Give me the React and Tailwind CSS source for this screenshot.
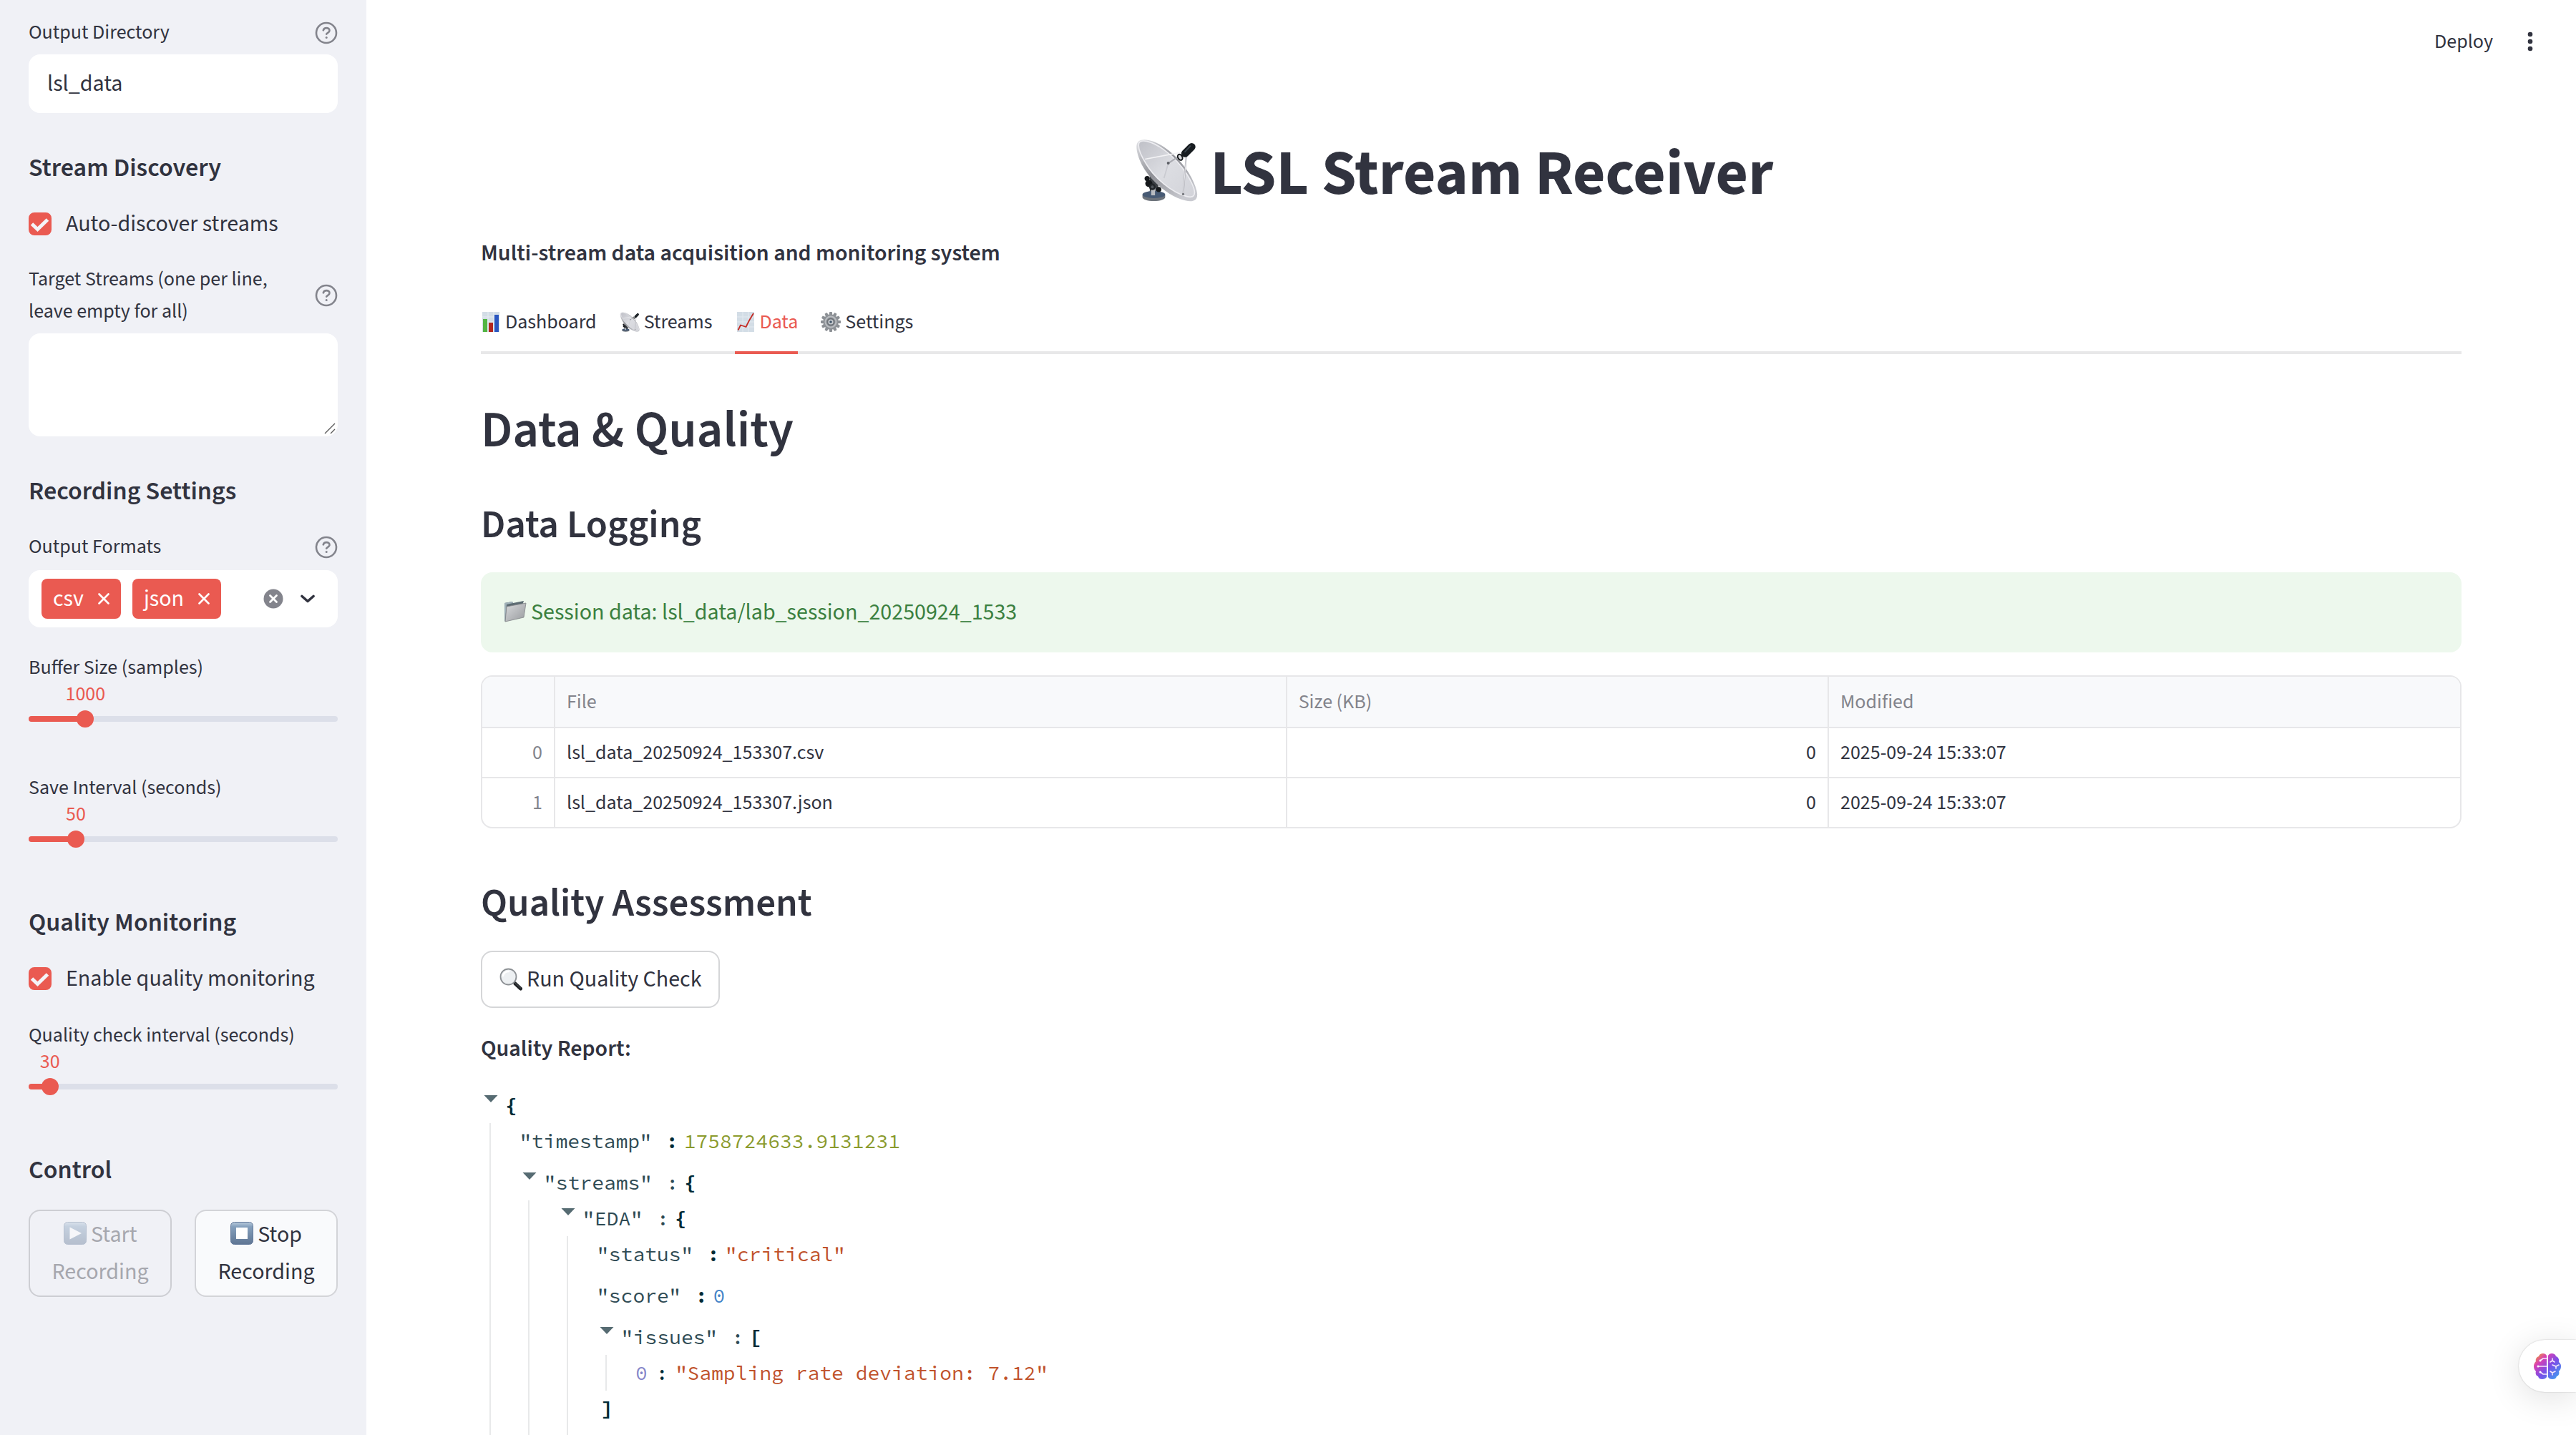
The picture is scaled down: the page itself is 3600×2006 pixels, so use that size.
import { useId, useState } from "react";

/* ---------- icons ---------- */

function DishIcon({ className }) {
  const id = useId();
  return (
    <svg viewBox="45 43 266 266" className={className} aria-hidden="true">
      <defs>
        <linearGradient id={id + "a"} x1="0" y1="0" x2="1" y2="1">
          <stop offset="0" stopColor="#bfc0c7" />
          <stop offset="0.5" stopColor="#dcdde2" />
          <stop offset="1" stopColor="#d2d3d9" />
        </linearGradient>
        <linearGradient id={id + "b"} x1="0" y1="0" x2="0.7" y2="1">
          <stop offset="0" stopColor="#e3e4e8" />
          <stop offset="0.5" stopColor="#8f9096" />
          <stop offset="1" stopColor="#c9cad0" />
        </linearGradient>
      </defs>
      <path d="M108 190v90h36v-60z" fill="#3b3f44" />
      <rect x="113" y="245" width="19" height="46" fill="#a9adb3" />
      <path d="M77 280v10c0 9 21 16 48 16s48-7 48-16v-10z" fill="#6d737b" />
      <ellipse cx="125" cy="279" rx="48" ry="15" fill="#475a74" />
      <rect x="114" y="240" width="16" height="42" fill="#b9bcc1" />
      <circle cx="97" cy="211" r="11" fill="#15181b" />
      <circle cx="104" cy="232" r="15" fill="#15181b" />
      <circle cx="119" cy="246" r="14" fill="#22262a" />
      <circle cx="119" cy="246" r="6" fill="#50555b" />
      <circle cx="146" cy="257" r="11" fill="#15181b" />
      <path d="M52 75C52 38 104 36 168 78c62 42 118 112 138 184 10 40-12 50-48 42-72-18-148-84-183-150C60 124 52 98 52 75z" fill={"url(#" + id + "b)"} />
      <path d="M62 62c8-18 50-12 104 26 58 42 108 106 128 164 10 34-4 42-32 34C198 268 126 206 92 148 72 116 56 82 62 62z" fill={"url(#" + id + "a)"} />
      <path d="M62 62c8-18 50-12 104 26 58 42 108 106 128 164 10 34-4 42-32 34C198 268 126 206 92 148 72 116 56 82 62 62z" fill="none" stroke="#ededf1" strokeWidth="5" />
      <path d="M186 147l-18 62" stroke="#c2c3ca" strokeWidth="5" opacity="0.7" />
      <path d="M88 129l150-28" stroke="#f3f3f5" strokeWidth="5" />
      <path d="M186 147l44-30M262 118l-13 160" stroke="#a8a9b0" strokeWidth="6" />
      <path d="M262 118l-13 160" stroke="#e8e8ec" strokeWidth="3" />
      <circle cx="186" cy="146" r="6" fill="#5d6066" />
      <circle cx="249" cy="277" r="5" fill="#74767c" />
      <path d="M257 105l28-28" stroke="#171c20" strokeWidth="32" strokeLinecap="round" />
      <path d="M257 98l22-24" stroke="#3a444c" strokeWidth="6" strokeLinecap="round" />
      <ellipse cx="236" cy="121" rx="9" ry="13" transform="rotate(-30 236 121)" fill="#d9dade" stroke="#15181b" strokeWidth="6" />
    </svg>
  );
}

function BarsIcon({ className }) {
  return (
    <svg viewBox="0 0 28 28" className={className} aria-hidden="true">
      <rect x="2" y="0" width="24" height="28" fill="#d3dde6" />
      <path d="M2 7h24M2 14h24M2 21h24M10 0v28M18 0v28" stroke="#e6edf3" strokeWidth="1" />
      <rect x="3" y="10" width="6" height="18" fill="#52b543" />
      <rect x="11" y="15" width="6" height="13" fill="#b3261f" />
      <rect x="19" y="4" width="6" height="24" fill="#2a56c0" />
    </svg>
  );
}

function TrendIcon({ className }) {
  return (
    <svg viewBox="0 0 28 28" className={className} aria-hidden="true">
      <rect x="3" y="0" width="24" height="28" fill="#d3dde6" />
      <path d="M3 7h24M3 14h24M3 21h24M11 0v28M19 0v28" stroke="#e3eaf1" strokeWidth="1" />
      <path d="M4.500 25.500L8 18.500l7.500 2.500L20 12l6-10" fill="none" stroke="#c42b24" strokeWidth="1.800" strokeLinejoin="round" />
    </svg>
  );
}

function GearIcon({ className }) {
  const teeth = [0, 30, 60, 90, 120, 150, 180, 210, 240, 270, 300, 330];
  return (
    <svg viewBox="0 0 28 28" className={className} aria-hidden="true">
      {teeth.map((a) => (
        <path key={a} d="M12.300 0h3.400l.8 5h-5z" fill="#8b8f94" transform={"rotate(" + a + " 14 14)"} />
      ))}
      <circle cx="14" cy="14" r="10.500" fill="#8f9398" />
      <circle cx="14" cy="14" r="7.500" fill="none" stroke="#b9bcc0" strokeWidth="2" />
      <circle cx="14" cy="14" r="5.500" fill="#6f747a" />
      <circle cx="14" cy="14" r="3.600" fill="#c9ccd0" />
      <circle cx="14" cy="14" r="1.800" fill="#3f5468" />
    </svg>
  );
}

function FolderIcon({ className }) {
  const id = useId();
  return (
    <svg viewBox="0 0 32 32" className={className} aria-hidden="true">
      <defs>
        <linearGradient id={id} x1="0" y1="0" x2="1" y2="1">
          <stop offset="0" stopColor="#d9dbdd" />
          <stop offset="1" stopColor="#97999d" />
        </linearGradient>
      </defs>
      <path d="M1 3l11-2 1 2 15-3-2 6L3 29l-2-1z" fill="#5c6b72" />
      <path d="M1 3l11-2 1 2-9 2-2 23-1 0z" fill="#9fb0b8" />
      <path d="M4 8l27-5-3 20L2 29z" fill={"url(#" + id + ")"} stroke="#808387" strokeWidth="0.800" />
    </svg>
  );
}

function MagnifierIcon({ className }) {
  return (
    <svg viewBox="0 0 32 32" className={className} aria-hidden="true">
      <path d="M19 19l4 4" stroke="#7d8084" strokeWidth="3" />
      <path d="M22 22l7.500 7" stroke="#202326" strokeWidth="5" strokeLinecap="round" />
      <path d="M22.500 21.500l7 6.500" stroke="#5c6064" strokeWidth="1" strokeLinecap="round" />
      <circle cx="12.500" cy="12.500" r="11" fill="#edf0f2" stroke="#8d9195" strokeWidth="1.800" />
      <path d="M5 11c1-4 4-6 8-6" fill="none" stroke="#ffffff" strokeWidth="2.500" strokeLinecap="round" />
    </svg>
  );
}

function KeycapIcon({ className, shape }) {
  const id = useId();
  return (
    <svg viewBox="0 0 32 32" className={className} aria-hidden="true">
      <defs>
        <linearGradient id={id} x1="0" y1="0" x2="0" y2="1">
          <stop offset="0" stopColor="#b9cbdc" />
          <stop offset="0.200" stopColor="#85a0bd" />
          <stop offset="1" stopColor="#5f7593" />
        </linearGradient>
      </defs>
      <rect x="0.500" y="0.500" width="31" height="31" rx="5" fill={"url(#" + id + ")"} stroke="#62789a" />
      {shape === "play" ? <path d="M8.500 7.500v17L25 16z" fill="#fff" /> : <rect x="8" y="8" width="16" height="16" fill="#fff" />}
    </svg>
  );
}

function HelpIcon() {
  return (
    <svg viewBox="0 0 32 32" className="h-8 w-8 shrink-0" fill="none" stroke="#83848c" strokeLinecap="round" strokeLinejoin="round" aria-label="Help">
      <circle cx="16" cy="16" r="14" strokeWidth="2.600" />
      <path d="M11.800 12.300c.6-2.100 2.300-3.200 4.400-3.200 2.500 0 4.300 1.500 4.300 3.600 0 2.700-3.300 3-4.300 4.900" strokeWidth="2.600" />
      <path d="M16.200 22.500v.1" strokeWidth="3" />
    </svg>
  );
}

function CrossIcon() {
  return (
    <svg viewBox="0 0 16 16" className="h-4 w-4" fill="none" stroke="#fff" strokeWidth="2.600" strokeLinecap="round" aria-hidden="true">
      <path d="M1.500 1.500l13 13M14.500 1.500l-13 13" />
    </svg>
  );
}

function BrainIcon() {
  const id = useId();
  return (
    <svg viewBox="0 0 38 36" className="h-9 w-[38px]" aria-hidden="true">
      <defs>
        <linearGradient id={id} x1="0" y1="0" x2="1" y2="1">
          <stop offset="0.050" stopColor="#f0a02c" />
          <stop offset="0.270" stopColor="#d83fb4" />
          <stop offset="0.550" stopColor="#7a4fe8" />
          <stop offset="0.950" stopColor="#3aa0f0" />
        </linearGradient>
      </defs>
      <g fill={"url(#" + id + ")"}>
        <path d="M18 3v30c-1 2-4 3-6 3-3 0-5-1-6-4-3-1-4-4-3-7-2-2-3-4-3-7s1-5 3-7c-1-3 1-6 4-7 1-3 3-4 6-4 2 0 4 1 5 3zM20 3v30c1 2 3 3 6 3 3 0 5-1 6-4 3-1 4-4 3-7 2-2 3-4 3-7s-1-4-3-6c1-4-1-7-4-8-1-3-3-4-6-4-2 0-4 1-5 3z" />
      </g>
      <g fill="none" stroke="#f6e8fb" strokeWidth="1.600" strokeLinecap="round">
        <path d="M18 7h-5l-4 3M18 18H6M18 29h-5l-4-3M26 7v3l-3 2M26 10l3 2M26 16l5 2 4-2M31 18v3M23 25l3 2 4-2M26 27v3" />
      </g>
      <g fill="#fff">
        <circle cx="9" cy="10" r="1.500" />
        <circle cx="6" cy="18" r="1.500" />
        <circle cx="9" cy="26" r="1.500" />
      </g>
    </svg>
  );
}

/* ---------- sidebar ---------- */

function SideHeading({ children }) {
  return <h3 className="pt-[22px] text-[36px] leading-[46px] font-semibold">{children}</h3>;
}

function FieldLabel({ htmlFor, children, help }) {
  return (
    <div className="flex items-center justify-between gap-4">
      <label htmlFor={htmlFor} className="text-[28px] leading-[45px]">
        {children}
      </label>
      {help && <HelpIcon />}
    </div>
  );
}

function Check({ id, children }) {
  return (
    <label htmlFor={id} className="flex h-[46px] items-center gap-5 text-[32px] leading-[46px]">
      <span className="relative h-8 w-8 shrink-0">
        <input id={id} type="checkbox" defaultChecked className="peer block h-8 w-8 appearance-none rounded-lg border-2 border-gray-300 bg-white checked:border-[#ea5a51] checked:bg-[#ea5a51]" />
        <svg viewBox="0 0 32 32" className="pointer-events-none absolute inset-0 hidden h-8 w-8 peer-checked:block" fill="none" stroke="#f4f4f8" strokeWidth="5" aria-hidden="true">
          <path d="M4.500 16l8 7.500L26.500 10" />
        </svg>
      </span>
      {children}
    </label>
  );
}

function Slider({ id, label, min, max, initial }) {
  const [value, setValue] = useState(initial);
  const pct = ((value - min) / (max - min)) * 100;
  return (
    <div className="h-[136px]">
      <label htmlFor={id} className="block text-[28px] leading-[49px]">
        {label}
      </label>
      <div className="flex h-6">
        <div style={{ width: pct + "%" }} />
        <output htmlFor={id} className="flex w-0 justify-center text-[28px] leading-6 text-[#ea5a51]">
          {value}
        </output>
      </div>
      <div className="relative mt-[11px] flex h-6 items-center">
        <div className="h-2 w-full overflow-hidden rounded-full bg-[#dcdfe9]">
          <div className="h-full bg-[#ea5a51]" style={{ width: pct + "%" }} />
        </div>
        <input
          id={id}
          type="range"
          min={min}
          max={max}
          value={value}
          onChange={(e) => setValue(Number(e.target.value))}
          className="absolute -inset-x-3 h-6 appearance-none bg-transparent [&::-webkit-slider-thumb]:h-6 [&::-webkit-slider-thumb]:w-6 [&::-webkit-slider-thumb]:appearance-none [&::-webkit-slider-thumb]:rounded-full [&::-webkit-slider-thumb]:bg-[#ea5a51]"
        />
      </div>
    </div>
  );
}

function Tag({ children }) {
  return (
    <span className="flex h-14 items-center rounded-lg bg-[#ea5a51] px-4 text-[32px] text-white">
      {children}
      <button type="button" aria-label={"Remove " + children} className="ml-5">
        <CrossIcon />
      </button>
    </span>
  );
}

function Sidebar() {
  return (
    <aside className="flex w-[512px] shrink-0 flex-col gap-8 bg-[#f0f1f6] px-10 pt-[23px]">
      <div className="flex flex-col gap-2">
        <FieldLabel htmlFor="out-dir" help>
          Output Directory
        </FieldLabel>
        <input id="out-dir" type="text" defaultValue="lsl_data" className="h-[82px] w-full rounded-2xl bg-white px-[26px] text-[32px]" />
      </div>

      <SideHeading>Stream Discovery</SideHeading>
      <Check id="auto-discover">Auto-discover streams</Check>
      <div className="flex flex-col gap-2">
        <FieldLabel htmlFor="targets" help>
          Target Streams (one per line, leave empty for all)
        </FieldLabel>
        <div className="relative">
          <textarea id="targets" className="block h-36 w-full resize-none rounded-2xl bg-white px-6 py-4 text-[32px]" />
          <svg viewBox="0 0 16 16" className="pointer-events-none absolute right-[3px] bottom-[3px] h-4 w-4" stroke="#5b5b5b" strokeWidth="1.400" aria-hidden="true">
            <path d="M1 15L15 1M9 15l6-6" />
          </svg>
        </div>
      </div>

      <SideHeading>Recording Settings</SideHeading>
      <div className="flex flex-col gap-2">
        <div className="pb-0.5">
          <FieldLabel htmlFor="formats" help>
            Output Formats
          </FieldLabel>
        </div>
        <div className="flex h-20 items-center gap-4 rounded-2xl bg-white pr-8 pl-[18px]">
          <Tag>csv</Tag>
          <Tag>json</Tag>
          <input id="formats" type="text" className="min-w-0 flex-1 text-[32px]" />
          <button type="button" aria-label="Clear all" className="mr-2">
            <svg viewBox="0 0 28 28" className="h-7 w-7" aria-hidden="true">
              <circle cx="14" cy="14" r="13.500" fill="#83848c" />
              <path d="M9.500 9.500l9 9M18.500 9.500l-9 9" stroke="#fff" strokeWidth="2.800" strokeLinecap="round" />
            </svg>
          </button>
          <button type="button" aria-label="Open list">
            <svg viewBox="0 0 20 12" className="h-3 w-5" fill="none" stroke="#31333f" strokeWidth="3.600" strokeLinecap="round" strokeLinejoin="round" aria-hidden="true">
              <path d="M2 2.500l8 7 8-7" />
            </svg>
          </button>
        </div>
      </div>
      <Slider id="buffer" label="Buffer Size (samples)" min={100} max={5000} initial={1000} />
      <Slider id="save" label="Save Interval (seconds)" min={5} max={300} initial={50} />

      <SideHeading>Quality Monitoring</SideHeading>
      <Check id="enable-quality">Enable quality monitoring</Check>
      <Slider id="quality" label="Quality check interval (seconds)" min={10} max={300} initial={30} />

      <SideHeading>Control</SideHeading>
      <div className="grid grid-cols-2 gap-8">
        <button type="button" disabled className="rounded-2xl border-2 border-[#cdced3] px-6 py-[7px] text-[32px] leading-[52px] text-[#a6a7ae]">
          <KeycapIcon shape="play" className="inline h-8 w-8 align-[-4px] opacity-40" /> Start Recording
        </button>
        <button type="button" className="rounded-2xl border-2 border-[#d3d4d8] bg-[#f9fafc] px-6 py-[7px] text-[32px] leading-[52px]">
          <KeycapIcon shape="stop" className="inline h-8 w-8 align-[-4px]" /> Stop Recording
        </button>
      </div>
    </aside>
  );
}

/* ---------- main ---------- */

const TABS = [
  { name: "Dashboard", Icon: BarsIcon },
  { name: "Streams", Icon: DishIcon },
  { name: "Data", Icon: TrendIcon },
  { name: "Settings", Icon: GearIcon },
];

function Tabs() {
  const [active, setActive] = useState("Data");
  return (
    <div role="tablist" className="mt-7 flex gap-8 shadow-[inset_0_-4px_0_#e8e8e9]">
      {TABS.map(({ name, Icon }) => (
        <button
          key={name}
          type="button"
          role="tab"
          aria-selected={active === name}
          onClick={() => setActive(name)}
          className={"flex h-[87px] items-center gap-1.5 border-b-4 text-[28px] " + (active === name ? "border-[#ea5a51] text-[#ea5a51]" : "border-transparent")}
        >
          <Icon className="h-7 w-7" />
          {name}
        </button>
      ))}
    </div>
  );
}

const FILES = [
  { file: "lsl_data_20250924_153307.csv", size: 0, modified: "2025-09-24 15:33:07" },
  { file: "lsl_data_20250924_153307.json", size: 0, modified: "2025-09-24 15:33:07" },
];

function FileTable() {
  return (
    <div className="mt-8 overflow-hidden rounded-2xl border-2 border-[#e7e7e9]">
      <table className="w-full table-fixed border-separate border-spacing-0 text-[28px]">
        <colgroup>
          <col className="w-[102px]" />
          <col className="w-[37%]" />
          <col className="w-[27.400%]" />
          <col />
        </colgroup>
        <thead className="bg-[#f8f9fb] text-left text-[#83848c]">
          <tr className="h-[72px]">
            <th className="border-r-2 border-b-2 border-[#e7e7e9]" />
            <th className="border-r-2 border-b-2 border-[#e7e7e9] px-4 font-normal">File</th>
            <th className="border-r-2 border-b-2 border-[#e7e7e9] px-4 font-normal">Size (KB)</th>
            <th className="border-b-2 border-[#e7e7e9] px-4 font-normal">Modified</th>
          </tr>
        </thead>
        <tbody className="[&>tr:last-child>td]:border-b-0">
          {FILES.map((f, i) => (
            <tr key={f.file} className="h-[70px] last:h-[68px]">
              <td className="border-r-2 border-b-2 border-[#e7e7e9] px-4 text-right text-[#83848c]">{i}</td>
              <td className="border-r-2 border-b-2 border-[#e7e7e9] px-4">{f.file}</td>
              <td className="border-r-2 border-b-2 border-[#e7e7e9] px-4 text-right">{f.size}</td>
              <td className="border-b-2 border-[#e7e7e9] px-4">{f.modified}</td>
            </tr>
          ))}
        </tbody>
      </table>
    </div>
  );
}

function Leaf({ name, index, value, tone }) {
  return (
    <div className="flex">
      {index === undefined ? (
        <>
          <span className="mr-5">"{name}"</span>
          <span className="mr-2 font-semibold text-[#002b36]">:</span>
        </>
      ) : (
        <>
          <span className="mr-3 text-[#8585c9]">{index}</span>
          <span className="mr-2.5 text-[#002b36]">:</span>
        </>
      )}
      <span className={tone}>{value}</span>
    </div>
  );
}

function Node({ name, open, close, children }) {
  return (
    <div>
      <div className="flex">
        <button type="button" aria-label="Collapse" className="flex h-[50px] w-[34px] items-start pt-[11px] pl-1">
          <svg viewBox="0 0 20 10" className="h-2.5 w-5" fill="#566b72" aria-hidden="true">
            <path d="M0.500 0h19L10 10z" />
          </svg>
        </button>
        {name && (
          <>
            <span className="mr-5">"{name}"</span>
            <span className="mr-2">:</span>
          </>
        )}
        <span className="font-bold text-[#002b36]">{open}</span>
      </div>
      <div className="ml-3 flex flex-col gap-2 border-l-2 border-[#e8e9ea] pl-10">{children}</div>
      {close && <div className="pl-1.5 font-bold text-[#002b36]">{close}</div>}
    </div>
  );
}

function QualityReport() {
  return (
    <div className="mt-7 font-['Source_Code_Pro','Liberation_Mono',monospace] text-[28px] leading-[50px] text-[#2f4b54]">
      <Node open="{">
        <Leaf name="timestamp" value="1758724633.9131231" tone="text-[#8a9a2c]" />
        <Node name="streams" open="{">
          <Node name="EDA" open="{">
            <Leaf name="status" value={'"critical"'} tone="text-[#c0522b]" />
            <Leaf name="score" value="0" tone="text-[#4484c8]" />
            <Node name="issues" open="[" close="]">
              <Leaf index={0} value={'"Sampling rate deviation: 7.12"'} tone="text-[#c0522b]" />
            </Node>
            <div className="h-10" />
          </Node>
        </Node>
      </Node>
    </div>
  );
}

export default function App() {
  return (
    <div className="flex h-screen overflow-hidden bg-white font-['Source_Sans_3','Noto_Sans_CJK_SC',sans-serif] text-[#31333f]">
      <Sidebar />
      <main className="min-w-0 flex-1 overflow-hidden">
        <header className="flex h-[116px] items-center justify-end gap-[42px] pr-[54px] text-[28px]">
          <button type="button">Deploy</button>
          <button type="button" aria-label="Menu" className="w-5">
            <svg viewBox="0 0 20 28" className="h-7 w-5" fill="#31333f" aria-hidden="true">
              <circle cx="10" cy="4" r="3.300" />
              <circle cx="10" cy="14" r="3.300" />
              <circle cx="10" cy="24" r="3.300" />
            </svg>
          </button>
        </header>
        <div className="px-[160px] pt-[75px]">
          <h1 className="pr-12 text-center text-[88px] leading-[106px] font-bold">
            <DishIcon className="inline h-[88px] w-[88px] align-[-11px]" /> LSL Stream Receiver
          </h1>
          <p className="mt-8 text-[32px] leading-[51px] font-semibold">Multi-stream data acquisition and monitoring system</p>
          <Tabs />
          <h2 className="mt-16 text-[71px] leading-[86px] font-semibold">Data &amp; Quality</h2>
          <h3 className="mt-14 text-[55px] leading-[67px] font-semibold">Data Logging</h3>
          <div role="status" className="mt-8 flex h-28 items-center gap-1.5 rounded-2xl bg-[#edf8ed] px-8 text-[32px] text-[#3b8040]">
            <FolderIcon className="h-8 w-8" />
            Session data: lsl_data/lab_session_20250924_1533
          </div>
          <FileTable />
          <h3 className="mt-[72px] text-[55px] leading-[67px] font-semibold">Quality Assessment</h3>
          <button type="button" className="mt-8 flex h-20 items-center gap-1.5 rounded-2xl border-2 border-[#d5d6d8] px-6 text-[32px]">
            <MagnifierIcon className="h-8 w-8" />
            Run Quality Check
          </button>
          <p className="mt-8 text-[32px] leading-[51px] font-semibold">Quality Report:</p>
          <QualityReport />
        </div>
      </main>
      <button type="button" aria-label="Assistant" className="fixed right-0 bottom-[60px] flex h-[73px] w-20 items-center rounded-l-full bg-white pl-[21px] shadow-[0_0_2px_rgba(0,0,0,0.25),0_8px_48px_rgba(0,0,0,0.12)]">
        <BrainIcon />
      </button>
    </div>
  );
}
